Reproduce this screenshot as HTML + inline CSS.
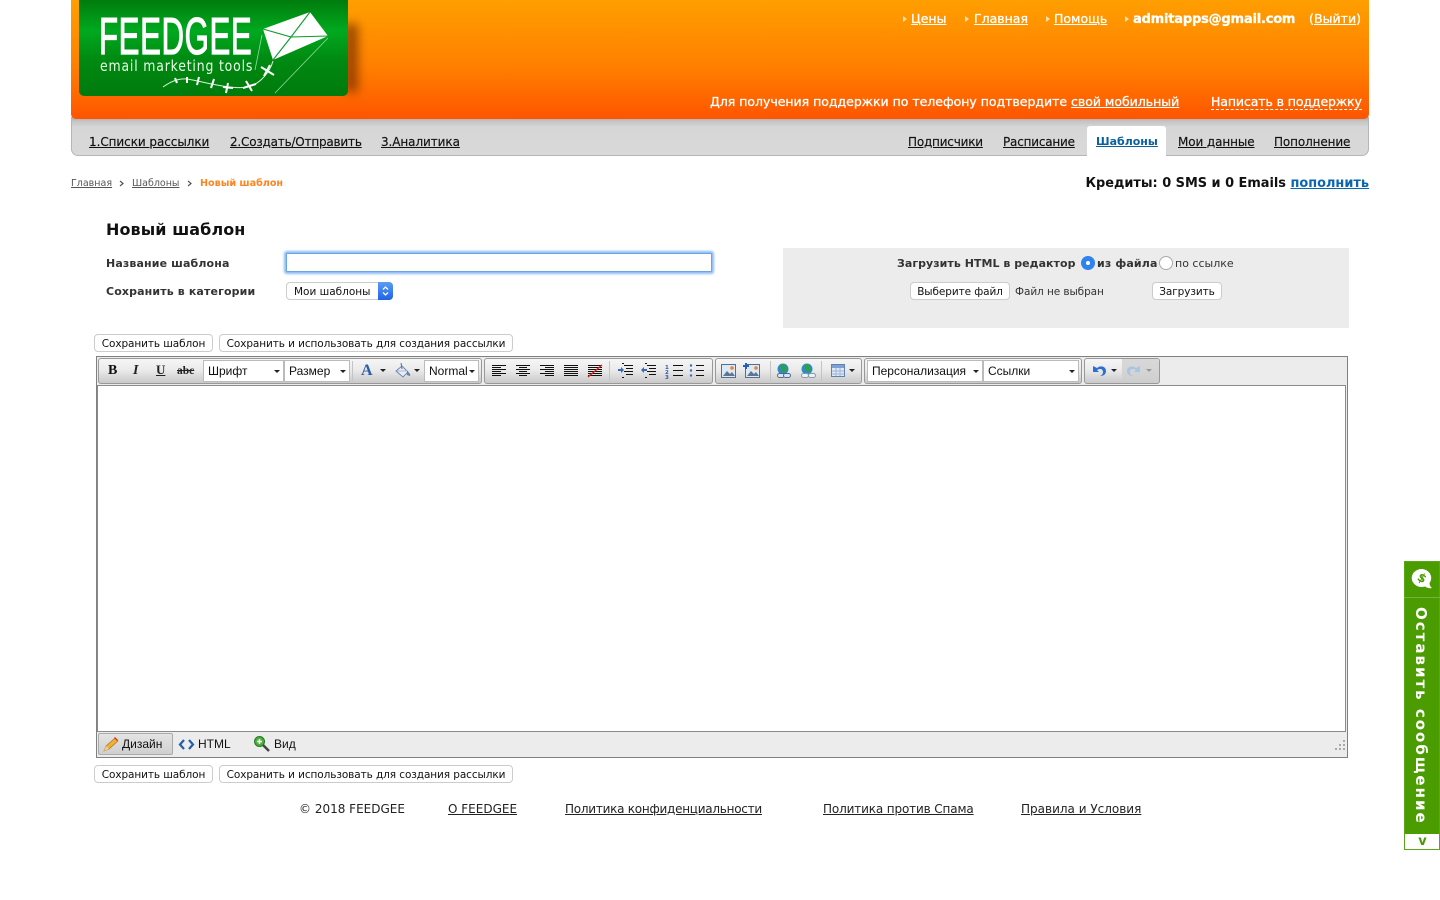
<!DOCTYPE html>
<html lang="ru"><head><meta charset="utf-8"><title>Новый шаблон</title>
<style>
html,body{margin:0;padding:0;background:#fff;width:1440px;height:900px;overflow:hidden}
body{position:relative;font-family:"DejaVu Sans",Verdana,sans-serif;color:#000}
.t{position:absolute;white-space:nowrap;line-height:16px}
.b{position:absolute;box-sizing:border-box}
a{color:inherit;text-decoration:underline}
.w{color:#fff;font-size:12.5px;-webkit-text-stroke:.3px #fff}
.n{font-size:12px;color:#111;-webkit-text-stroke:.15px #111}
.btn{position:absolute;box-sizing:border-box;height:18px;background:#fff;border:1px solid #ccc;border-radius:4px;font-size:10.5px;line-height:18px;text-align:center;color:#111;white-space:nowrap;letter-spacing:-.09px}
.l{font-size:11px;font-weight:bold;color:#333;letter-spacing:.13px}
.s{position:absolute;box-sizing:border-box;height:22px;top:360px;background:#fff;border:1px solid #bbb;font:12px/20px "Liberation Sans",Arial,sans-serif;padding-left:4px;color:#111;white-space:nowrap}
.s i,.ar{position:absolute;width:0;height:0;border-left:3px solid transparent;border-right:3px solid transparent;border-top:3px solid #222}
.s i{right:3px;top:9px}
.g{position:absolute;box-sizing:border-box;top:358px;height:26px;background:linear-gradient(#f6f6f6,#ebebeb 45%,#c9c9c9);border:1px solid #999;border-radius:3px}
.sep{position:absolute;top:361px;width:1px;height:20px;background:#c4c4c4}
.fmt{position:absolute;font-family:"Liberation Serif",serif;font-size:12px;line-height:16px;top:362px;color:#222;font-weight:bold}
.tb{position:absolute;font:12px/16px "Liberation Sans",Arial,sans-serif;top:736px;color:#111;white-space:nowrap}
</style></head><body>

<div class="b" style="left:71px;top:117px;width:1298px;height:39px;background:linear-gradient(#b4b4b4 2px,#c4c4c4 4px,#d6d6d6 10px,#d9d9d9);border:1px solid #b5b5b5;border-top:0;border-radius:0 0 7px 7px"></div>
<div class="b" style="left:71px;top:0;width:1298px;height:119px;background:linear-gradient(#ff9f00,#ff8000 55%,#ff5500);border-radius:0 0 5px 5px"></div>

<div class="b" style="left:344px;top:24px;width:14px;height:68px;background:#7a3200;filter:blur(5px);opacity:.75"></div>
<div class="b" style="left:79px;top:0;width:269px;height:96px;border-radius:0 0 5px 5px;background:linear-gradient(#007c0c,#00a91f 32%,#008a12 62%,#007a0c)"></div>
<div class="t" style="left:99px;top:11px;color:#fff;font:52px/52px 'Liberation Sans',Arial,sans-serif;transform-origin:0 0;transform:scaleX(.6);letter-spacing:1px;-webkit-text-stroke:1.2px #fff">FEEDGEE</div>
<div class="t" style="left:100px;top:58px;color:#e8ffe8;font:15px/17px 'DejaVu Sans',sans-serif;transform-origin:0 0;transform:scaleX(.83);letter-spacing:1px">email marketing tools</div>
<svg class="b" style="left:160px;top:5px" width="175" height="95" viewBox="160 5 175 95">
<path d="M263 29L310 12 328 36 273 60Z" fill="#fff"/>
<path d="M263 29L291 37 310 12M291 37L328 36M291 37L273 60" stroke="#0b9a2a" stroke-width="1.100" fill="none"/>
<path d="M262 35L255 70M328 38L275 93" stroke="#8fdc9f" stroke-width=".8" fill="none"/>
<path d="M273 61C270 72 260 84 248 87 232 90 205 82 187 79 178 78 170 82 163 87" stroke="#d5f5d5" stroke-width="1" fill="none"/>
<g stroke="#fff" stroke-width="2" fill="none"><path d="M261 67L274 75M270 65L264 76"/><path d="M246 81L252 91M243 88L256 84"/><path d="M228 83L226 93M223 87L233 88"/><path d="M214 79L211 88"/><path d="M199 77L197 85"/><path d="M187 77V83"/><path d="M175 78L177 83"/></g>
</svg>

<svg class="b" style="left:902px;top:15px" width="240" height="8"><path d="M1 1l4 3-4 3zM63 1l4 3-4 3zM144 1l4 3-4 3zM223 1l4 3-4 3z" fill="#ffe0b0"/></svg>
<div class="t w" style="left:911px;top:11px"><a href="#">Цены</a></div>
<div class="t w" style="left:974px;top:11px"><a href="#">Главная</a></div>
<div class="t w" style="left:1054px;top:11px"><a href="#">Помощь</a></div>
<div class="t w" style="left:1133px;top:10px;font-weight:bold;font-size:13px;letter-spacing:-.2px;margin-top:2px">admitapps@gmail.com</div>
<div class="t w" style="left:1309px;top:11px;letter-spacing:.05px">(<a href="#">Выйти</a>)</div>
<div class="t w" style="left:710px;top:94px;letter-spacing:-.015px">Для получения поддержки по телефону подтвердите <a href="#">свой мобильный</a></div>
<div class="t w" style="left:1211px;top:94px;border-bottom:1px dashed #fff;line-height:15px;letter-spacing:-.1px">Написать в поддержку</div>

<div class="t n" style="left:89px;top:134px;letter-spacing:-.06px"><a href="#">1.Списки рассылки</a></div>
<div class="t n" style="left:230px;top:134px;letter-spacing:-.2px"><a href="#">2.Создать/Отправить</a></div>
<div class="t n" style="left:381px;top:134px;letter-spacing:-.08px"><a href="#">3.Аналитика</a></div>
<div class="b" style="left:1087px;top:126px;width:79px;height:31px;background:#fff;border-radius:3px 3px 0 0"></div>
<div class="t n" style="left:908px;top:134px;letter-spacing:-.2px"><a href="#">Подписчики</a></div>
<div class="t n" style="left:1003px;top:134px;letter-spacing:-.2px"><a href="#">Расписание</a></div>
<div class="t" style="left:1096px;top:134px;font-size:11px;font-weight:bold;color:#0a5f9f"><a href="#">Шаблоны</a></div>
<div class="t n" style="left:1178px;top:134px;letter-spacing:-.1px"><a href="#">Мои данные</a></div>
<div class="t n" style="left:1274px;top:134px;letter-spacing:-.12px"><a href="#">Пополнение</a></div>

<div class="t" style="left:71px;top:176px;font-size:9.5px;color:#555"><a href="#">Главная</a></div>
<svg class="b" style="left:119px;top:180px" width="6" height="7"><path d="M1 1l3 2.500-3 2.500" stroke="#555" stroke-width="1.200" fill="none"/></svg>
<div class="t" style="left:132px;top:176px;font-size:9.5px;color:#555"><a href="#">Шаблоны</a></div>
<svg class="b" style="left:187px;top:180px" width="6" height="7"><path d="M1 1l3 2.500-3 2.500" stroke="#555" stroke-width="1.200" fill="none"/></svg>
<div class="t" style="left:200px;top:176px;font-size:9.6px;font-weight:bold;color:#ff8420">Новый шаблон</div>
<div class="t" style="right:71px;top:176px;font-size:12.9px;font-weight:bold;color:#111">Кредиты: 0 SMS и 0 Emails <a href="#" style="color:#0a66b0">пополнить</a></div>

<div class="t" style="left:106px;top:221px;font-size:16px;font-weight:bold;line-height:18px;color:#111;letter-spacing:.08px">Новый шаблон</div>
<div class="t l" style="left:106px;top:256px">Название шаблона</div>
<div class="t l" style="left:106px;top:284px">Сохранить в категории</div>
<div class="b" style="left:286px;top:253px;width:426px;height:19px;background:#fff;border:1px solid #6aa5e8;box-shadow:0 0 2px 2px #8fbcf2;border-radius:1px"></div>
<div class="b" style="left:286px;top:282px;width:107px;height:18px;background:#fff;border:1px solid #ccc;border-radius:4px;font-size:10.5px;line-height:18px;padding-left:7px;color:#111;white-space:nowrap">Мои шаблоны</div>
<div class="b" style="left:378px;top:282px;width:15px;height:18px;background:linear-gradient(#5a9df5,#1f62e8);border-radius:0 4px 4px 0"></div>
<svg class="b" style="left:381px;top:285px" width="9" height="12"><path d="M2 4.500L4.500 2 7 4.500M2 7.500L4.500 10 7 7.500" stroke="#fff" stroke-width="1.300" fill="none"/></svg>

<div class="b" style="left:783px;top:248px;width:566px;height:80px;background:#ececec"></div>
<div class="t l" style="left:897px;top:256px;letter-spacing:.04px">Загрузить HTML в редактор</div>
<div class="b" style="left:1081px;top:256px;width:14px;height:14px;border-radius:50%;background:#2f83ee"></div>
<div class="b" style="left:1086px;top:261px;width:4px;height:4px;border-radius:50%;background:#fff"></div>
<div class="t l" style="left:1097px;top:256px">из файла</div>
<div class="b" style="left:1159px;top:256px;width:14px;height:14px;border-radius:50%;background:#fff;border:1px solid #aaa"></div>
<div class="t" style="left:1175px;top:256px;font-size:11px;color:#333">по ссылке</div>
<div class="btn" style="left:910px;top:282px;width:100px">Выберите файл</div>
<div class="t" style="left:1015px;top:284px;font-size:10.5px;color:#333;letter-spacing:-.08px">Файл не выбран</div>
<div class="btn" style="left:1152px;top:282px;width:70px">Загрузить</div>

<div class="btn" style="left:94px;top:334px;width:119px">Сохранить шаблон</div>
<div class="btn" style="left:219px;top:334px;width:294px">Сохранить и использовать для создания рассылки</div>

<!-- editor -->
<div class="b" style="left:96px;top:356px;width:1252px;height:402px;background:#ececec;border:1px solid #808080"></div>
<div class="b" style="left:97px;top:385px;width:1249px;height:347px;background:#fff;border:1px solid #8a8a8a"></div>

<div class="g" style="left:98px;width:384px"></div>
<div class="g" style="left:484px;width:229px"></div>
<div class="g" style="left:715px;width:147px"></div>
<div class="g" style="left:864px;width:218px"></div>
<div class="g" style="left:1084px;width:76px"></div>
<div class="b" style="left:1122px;top:359px;width:37px;height:24px;background:rgba(205,205,205,.75);border-radius:0 3px 3px 0"></div>

<div class="fmt" style="left:108px;font-size:14px;color:#111;top:363px">B</div>
<div class="fmt" style="left:133px;font-style:italic;font-size:14px;top:363px">I</div>
<div class="fmt" style="left:156px;text-decoration:underline;font-size:13px">U</div>
<div class="fmt" style="left:177px;font-size:11.5px;text-decoration:line-through;top:363px">abc</div>

<div class="s" style="left:203px;width:81px">Шрифт<i></i></div>
<div class="s" style="left:284px;width:66px">Размер<i></i></div>
<div class="sep" style="left:352px"></div>
<div class="fmt" style="left:361px;color:#2c5da8;font-size:16px;top:363px">A</div>
<div class="ar" style="left:380px;top:369px"></div>
<svg class="b" style="left:394px;top:362px" width="18" height="18"><path d="M2 9L8 4l6 6-5 5z" fill="#e8edf5" stroke="#6f86a8"/><path d="M13 9c2 2 4 3 3 5l-3-1z" fill="#5a7fb5"/><path d="M7 1l1 6" stroke="#5a6f90"/><path d="M3 9h10" stroke="#a8bad4"/></svg>
<div class="ar" style="left:414px;top:369px"></div>
<div class="s" style="left:424px;width:55px">Normal<i></i></div>

<svg class="b" style="left:491px;top:364px" width="112" height="14" stroke="#111" stroke-width="1">
<path d="M1 1.500h14M1 3.500h9M1 5.500h14M1 7.500h9M1 9.500h14M1 11.500h9"/>
<path d="M25 1.500h14M28 3.500h8M25 5.500h14M28 7.500h8M25 9.500h14M28 11.500h8"/>
<path d="M49 1.500h14M54 3.500h9M49 5.500h14M54 7.500h9M49 9.500h14M54 11.500h9"/>
<path d="M73 1.500h14M73 3.500h14M73 5.500h14M73 7.500h14M73 9.500h14M73 11.500h14"/>
<path d="M97 1.500h14M97 3.500h14M97 5.500h14M97 7.500h14M97 9.500h14M97 11.500h14"/>
<path d="M97 13L111 1" stroke="#e02010" stroke-width="1.300"/>
</svg>
<div class="sep" style="left:609px"></div>
<svg class="b" style="left:617px;top:363px" width="90" height="16">
<path d="M7 2.500h9M9 5.500h7M7 8.500h9M9 11.500h7M5 14.500h2M5 .5h2M30 2.500h9M32 5.500h7M30 8.500h9M32 11.500h7M28 14.500h2M28 .5h2M56 2.500h10M56 7.500h10M56 12.500h10M79 2.500h8M79 7.500h8M79 12.500h8" stroke="#111"/>
<path d="M1 6h3V4l3 3-3 3V8H1zM30 6h-3V4l-3 3 3 3V8h3z" fill="#3a69b5"/>
<text x="48" y="6" font-size="5.500" font-weight="bold" fill="#2c5da8">1</text><text x="48" y="11" font-size="5.500" font-weight="bold" fill="#2c5da8">2</text><text x="48" y="16" font-size="5.500" font-weight="bold" fill="#2c5da8">3</text>
<circle cx="74" cy="2.500" r="1.200" fill="#3a69b5"/><circle cx="74" cy="7.500" r="1.200" fill="#3a69b5"/><circle cx="74" cy="12.500" r="1.200" fill="#3a69b5"/>
</svg>

<svg class="b" style="left:721px;top:363px" width="120" height="16">
<rect x=".5" y="1.500" width="14" height="13" fill="#dce8f4" stroke="#4f6f95"/><path d="M2 13l4-5 3 3 2-2 3 4z" fill="#5e7490"/><circle cx="11" cy="5" r="1.800" fill="#f08030"/>
<rect x="24.500" y="1.500" width="14" height="13" fill="#dce8f4" stroke="#4f6f95"/><path d="M26 13l4-5 3 3 2-2 3 4z" fill="#5e7490"/><circle cx="35" cy="5" r="1.800" fill="#f08030"/><path d="M25 0v6M22 3h6" stroke="#2060c0" stroke-width="2"/>
<circle cx="62" cy="6" r="5.500" fill="#2a8fbf"/><path d="M59 2l5 0 2 5-4 2z" fill="#35a035"/><rect x="56.500" y="10.500" width="7" height="4" rx="2" fill="#dfe6f0" stroke="#4f6a90"/><rect x="62.500" y="10.500" width="7" height="4" rx="2" fill="#dfe6f0" stroke="#4f6a90"/>
<circle cx="86" cy="6" r="5.500" fill="#2a8fbf"/><path d="M83 2l5 0 2 5-4 2z" fill="#35a035"/><rect x="80.500" y="10.500" width="7" height="4" rx="2" fill="#eef1f6" stroke="#8a98ad"/><rect x="87.500" y="10.500" width="7" height="4" rx="2" fill="#eef1f6" stroke="#8a98ad"/>
</svg>
<div class="sep" style="left:770px"></div>
<div class="sep" style="left:821px"></div>
<svg class="b" style="left:831px;top:364px" width="16" height="14"><rect x=".5" y=".5" width="13" height="12" fill="#dfe8f6" stroke="#5f82b5"/><rect x="1" y="1" width="12" height="3" fill="#7fa0d0"/><path d="M1 7h12M1 10h12M5 4v8M9 4v8" stroke="#9db4d6"/></svg>
<div class="ar" style="left:849px;top:369px"></div>

<div class="s" style="left:867px;width:116px">Персонализация<i></i></div>
<div class="s" style="left:983px;width:96px">Ссылки<i></i></div>

<svg class="b" style="left:1090px;top:362px" width="60" height="18"><path d="M3 4v6h6L7 8c3-2 6-1 6 2 0 2-1 3-3 4 4 0 6-2 6-5 0-5-6-6-9-3z" fill="#2f6fd0"/><path d="M50 4v6h-6l2-2c-3-2-6-1-6 2 0 2 1 3 3 4-4 0-6-2-6-5 0-5 6-6 9-3z" fill="#aac4e6"/></svg>
<div class="ar" style="left:1111px;top:369px"></div>
<div class="ar" style="left:1146px;top:369px;border-top-color:#999"></div>

<!-- bottom tabs -->
<div class="b" style="left:98px;top:733px;width:75px;height:22px;background:linear-gradient(#e4e4e4,#cfcfcf);border:1px solid #aaa;border-radius:2px"></div>
<svg class="b" style="left:102px;top:736px" width="17" height="17"><path d="M2 15l2-5 9-8 3 3-9 8z" fill="#f0b030" stroke="#a06a10" stroke-width=".6"/><path d="M2 15l2-5 3 3z" fill="#e8d0a0"/><path d="M12 2l3 3 1-1-3-3z" fill="#e03030"/></svg>
<div class="tb" style="left:122px">Дизайн</div>
<svg class="b" style="left:178px;top:739px" width="17" height="11"><path d="M6 1L2 5.500l4 4.500M11 1l4 4.500-4 4.500" stroke="#1f5fb0" stroke-width="2.200" fill="none"/></svg>
<div class="tb" style="left:198px">HTML</div>
<svg class="b" style="left:253px;top:735px" width="18" height="17"><path d="M10 10l6 6" stroke="#444" stroke-width="2.500"/><circle cx="6.500" cy="6.500" r="5" fill="#4fae3f" stroke="#1f7a20"/><path d="M4 6.500h5M6.500 4v5" stroke="#fff" stroke-width="1.500"/></svg>
<div class="tb" style="left:274px">Вид</div>
<svg class="b" style="left:1334px;top:739px" width="12" height="12" fill="#a8a8a8"><rect x="9" y="1" width="2" height="2"/><rect x="5" y="5" width="2" height="2"/><rect x="9" y="5" width="2" height="2"/><rect x="1" y="9" width="2" height="2"/><rect x="5" y="9" width="2" height="2"/><rect x="9" y="9" width="2" height="2"/></svg>

<div class="btn" style="left:94px;top:765px;width:119px">Сохранить шаблон</div>
<div class="btn" style="left:219px;top:765px;width:294px">Сохранить и использовать для создания рассылки</div>

<div class="t" style="left:299px;top:801px;font-size:12px;color:#222">© 2018 FEEDGEE</div>
<div class="t" style="left:448px;top:801px;font-size:12px;color:#222"><a href="#">О FEEDGEE</a></div>
<div class="t" style="left:565px;top:801px;font-size:12px;color:#222;letter-spacing:-.25px"><a href="#">Политика конфиденциальности</a></div>
<div class="t" style="left:823px;top:801px;font-size:12px;color:#222;letter-spacing:-.14px"><a href="#">Политика против Спама</a></div>
<div class="t" style="left:1021px;top:801px;font-size:12px;color:#222"><a href="#">Правила и Условия</a></div>

<!-- side widget -->
<div class="b" style="left:1404px;top:561px;width:36px;height:289px;background:#4a9c00;border:1px solid #5aa81a"></div>
<div class="b" style="left:1404px;top:597px;width:36px;height:1px;background:#74b33f"></div>
<svg class="b" style="left:1411px;top:568px" width="24" height="22"><path d="M11 1a10 9 0 1 0 3 17.500c2 1.500 5 2 7 1.500-1.500-1-2.500-3-2.500-5A10 9 0 0 0 11 1z" fill="#fff"/><text x="11" y="14" font-size="12" font-weight="bold" fill="#4a9c00" text-anchor="middle" transform="rotate(30 11 10)">$</text></svg>
<div class="t" style="left:1412px;top:607px;writing-mode:vertical-rl;color:#fff;font-size:15px;font-weight:bold;letter-spacing:2px;line-height:18px">Оставить сообщение</div>
<div class="b" style="left:1405px;top:834px;width:34px;height:15px;background:#fff"></div>
<div class="t" style="left:1405px;top:834px;width:35px;text-align:center;font-size:13px;font-weight:bold;line-height:15px;color:#4a9c00">v</div>

</body></html>
